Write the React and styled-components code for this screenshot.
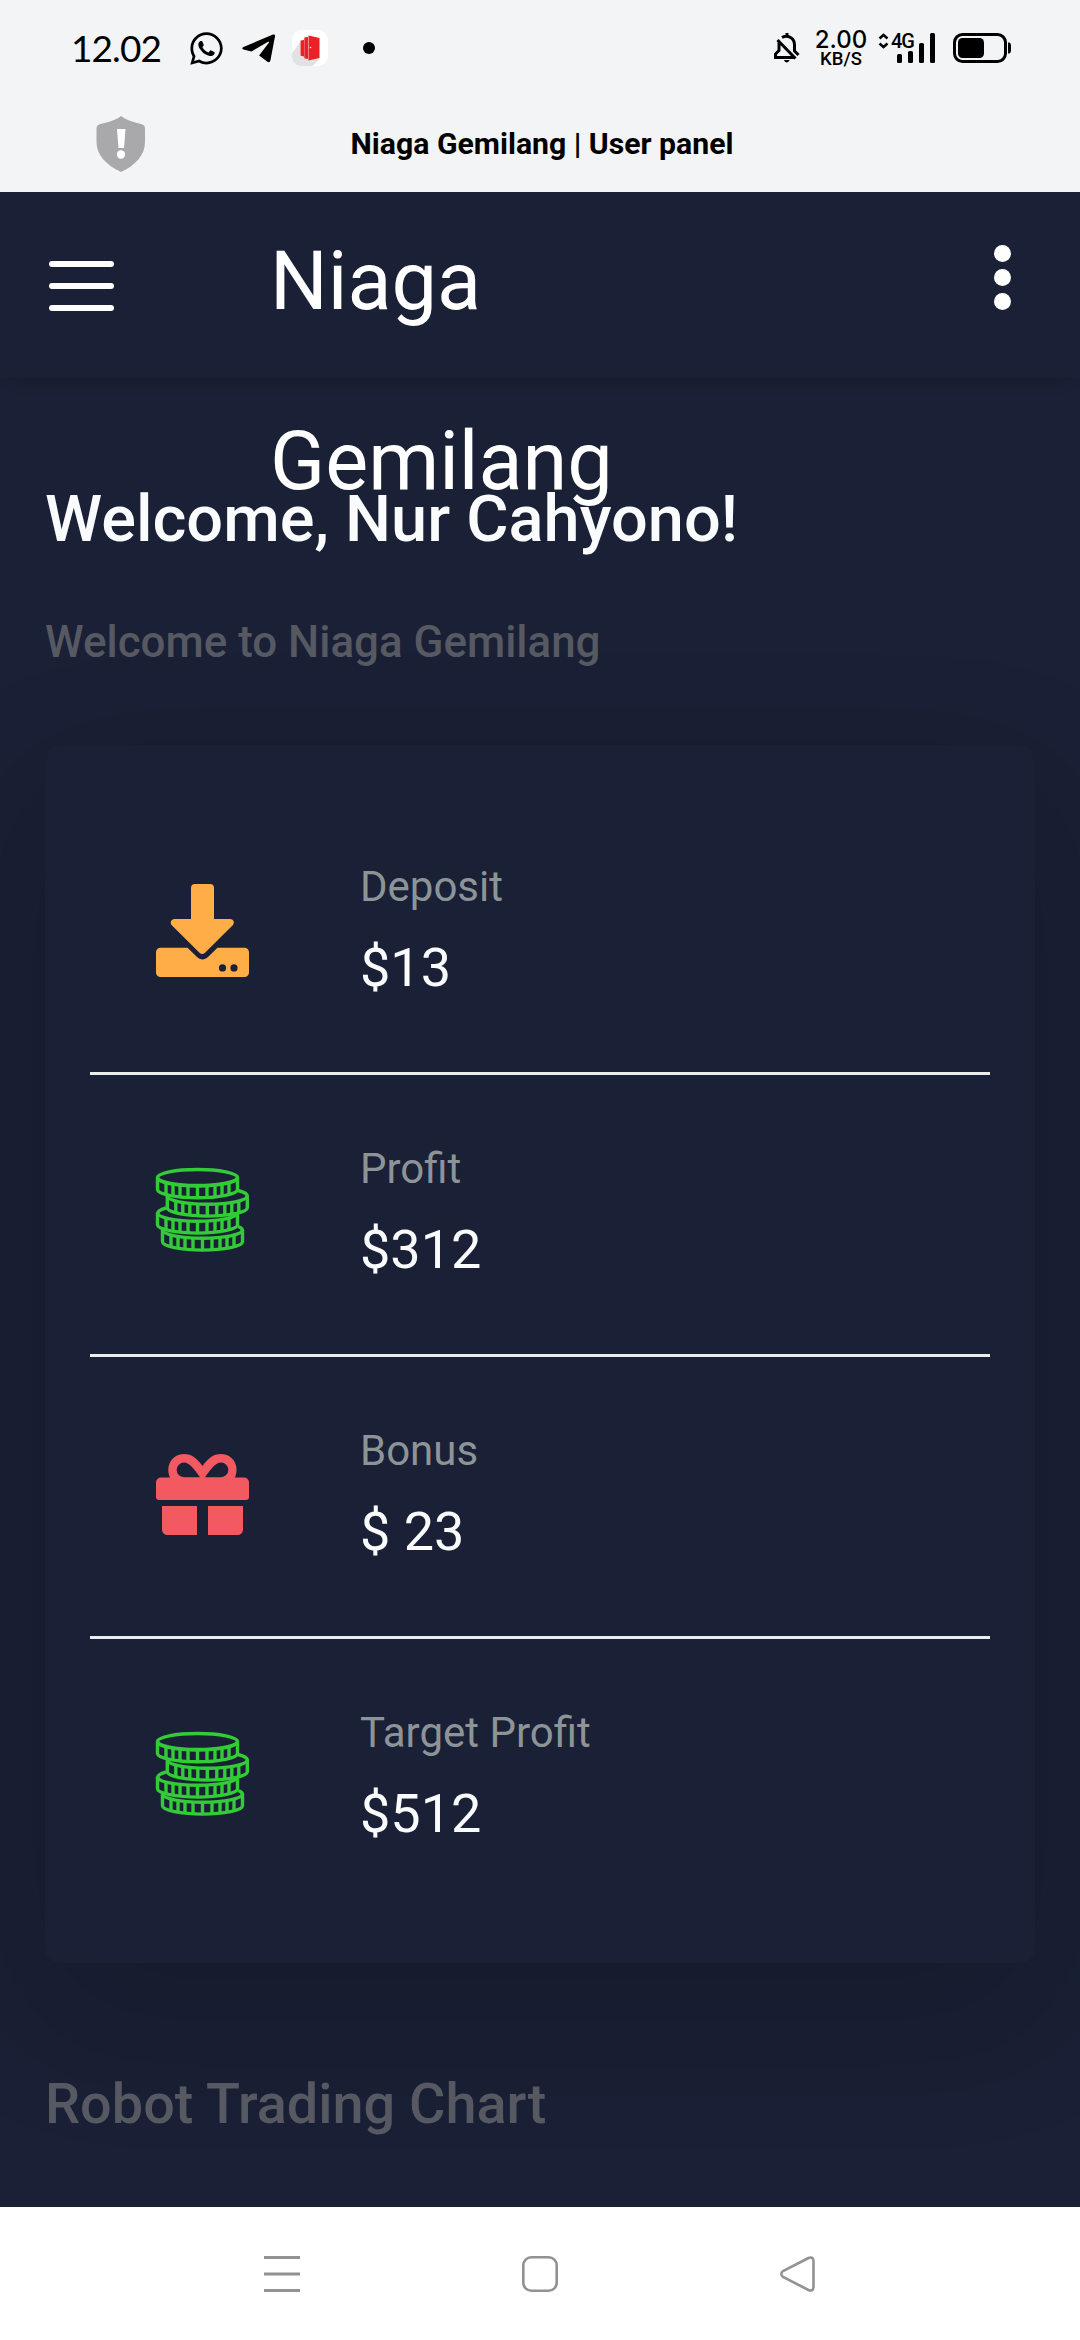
import React from "react";
import styled, { createGlobalStyle } from "styled-components";
import { FaWhatsapp } from "react-icons/fa";

const Global = createGlobalStyle`
  html, body { margin: 0; padding: 0; background: #1a2035; }
  *, *::before, *::after { box-sizing: border-box; }
  body { font-family: Roboto, "Noto Sans", sans-serif; }
`;

const Screen = styled.div`
  width: 1080px;
  height: 2340px;
  display: flex;
  flex-direction: column;
  overflow: hidden;
  background: #1a2035;
`;

const TopChrome = styled.div`
  flex: none;
  height: 192px;
  background: #f3f4f6;
  color: #000;
`;

const StatusBar = styled.div`
  height: 96px;
  padding: 0 68px 0 71px;
  display: flex;
  align-items: center;
  justify-content: space-between;
`;

const StatusGroup = styled.div`
  display: flex;
  align-items: center;
`;

const Clock = styled.span`
  width: 117px;
  font: 400 37px/44px Lato, sans-serif;
  letter-spacing: -0.9px;
  white-space: nowrap;
`;

const ChatIcon = styled(FaWhatsapp)`
  width: 37px;
  height: 37px;
`;

const Glyph = styled.svg`
  display: block;
  flex: none;
  overflow: visible;
  margin-left: ${(p) => p.$gap || 0}px;
`;

const Speed = styled.div`
  width: 52px;
  margin-left: 15px;
  padding-top: 2px;
  display: flex;
  flex-direction: column;
  align-items: center;
`;

const SpeedValue = styled.span`
  font: 500 24px/20px Inter, sans-serif;
`;

const SpeedUnit = styled.span`
  font: 500 18.5px/19px Roboto, sans-serif;
`;

const Signal = styled.div`
  position: relative;
  width: 57px;
  height: 30px;
  margin-left: 11px;
`;

const NetworkLabel = styled.span`
  position: absolute;
  left: 13px;
  top: -1px;
  font: 500 20px/18px Roboto, sans-serif;
  letter-spacing: -1px;
`;

const BrowserBar = styled.div`
  height: 96px;
  padding: 0 92px 0 96px;
  display: grid;
  grid-template-columns: 50px 1fr 50px;
  align-items: center;
`;

const PageTitle = styled.div`
  text-align: center;
  font-size: 30.2px;
  line-height: 36px;
  font-weight: 700;
  white-space: nowrap;
`;

const Header = styled.header`
  flex: none;
  height: 186px;
  display: flex;
  align-items: flex-start;
  position: relative;
  z-index: 1;
  color: #fff;
  box-shadow: 0 10px 15px -9px rgba(0, 0, 0, 0.14);
`;

const MenuButton = styled.div`
  width: 65px;
  margin: 69px 0 0 49px;
  display: flex;
  flex-direction: column;
  gap: 16px;
`;

const MenuBar = styled.span`
  height: 6px;
  border-radius: 3px;
  background: #fff;
`;

const Brand = styled.div`
  width: 400px;
  margin-left: 156px;
  font-size: 81px;
  line-height: 180px;
`;

const MoreButton = styled.div`
  margin: 53px 69px 0 auto;
  display: flex;
  flex-direction: column;
  gap: 7px;
`;

const MoreDot = styled.span`
  width: 17px;
  height: 17px;
  border-radius: 50%;
  background: #fff;
`;

const Page = styled.main`
  flex: 1;
  min-height: 0;
  overflow: hidden;
  padding: 99px 45px 0;
`;

const Greeting = styled.h1`
  margin: 0;
  font-size: 64.9px;
  line-height: 84px;
  font-weight: 500;
  color: #f9fbfd;
  white-space: nowrap;
`;

const Subtitle = styled.h2`
  margin: 50px 0 0;
  font-size: 43.9px;
  line-height: 62px;
  font-weight: 500;
  color: #575962;
  white-space: nowrap;
`;

const Card = styled.section`
  margin-top: 72px;
  height: 1218px;
  padding: 48px 45px 42px;
  border-radius: 15px;
  background: #1a2035;
  box-shadow: 0 48px 144px rgba(0, 0, 0, 0.175);
`;

const StatRow = styled.div`
  height: 282px;
  padding-left: 66px;
  display: flex;
  border-bottom: ${(p) => (p.$last ? "none" : "3px solid #ebecec")};
`;

const StatIcon = styled.div`
  width: 93px;
  margin-right: 111px;
  padding-top: ${(p) => p.$top}px;
`;

const StatText = styled.div`
  padding-top: 61px;
`;

const StatLabel = styled.div`
  font-size: 42px;
  line-height: 65px;
  color: #8d9498;
`;

const StatValue = styled.div`
  margin-top: 11px;
  font-size: 54px;
  line-height: 75px;
  color: #f9fbfd;
`;

const ChartTitle = styled.h3`
  margin: 102px 0 0;
  font-size: 55.8px;
  line-height: 78px;
  font-weight: 500;
  color: #575962;
  white-space: nowrap;
`;

const NavBar = styled.nav`
  flex: none;
  height: 133px;
  background: #fff;
  padding: 0 264px;
  display: flex;
  align-items: center;
  justify-content: space-between;
`;

const DownloadIcon = () => (
  <Glyph width="93" height="93" viewBox="0 0 93 93" fill="#ffad46">
    <path d="M39 0h15a4 4 0 0 1 4 4v31h16c4 0 5 4 2.500 6.500L49 68.800a4 4 0 0 1-5.500 0L16 41.500C13.500 39 15 35 18.500 35H35V4a4 4 0 0 1 4-4z" />
    <path fillRule="evenodd" d="M4.500 63.700H31.500L41 73c3.500 3.300 7.500 3.300 11 0l9.500-9.300H88.500a4.500 4.500 0 0 1 4.500 4.500V88.500a4.500 4.500 0 0 1-4.500 4.500H4.500A4.500 4.500 0 0 1 0 88.500V68.200a4.500 4.500 0 0 1 4.500-4.500zM66.500 80.300a3.600 3.600 0 1 0 0 7.200 3.600 3.600 0 0 0 0-7.200zM78 80.300a3.600 3.600 0 1 0 0 7.200 3.600 3.600 0 0 0 0-7.200z" />
  </Glyph>
);

const GiftIcon = () => (
  <Glyph width="93" height="82" viewBox="0 0 93 82" fill="#f25961">
    <path fillRule="evenodd" d="M14 23.500C9 12 16 0 28 0c8 0 13 4.500 18.500 12C52 4.500 57 0 65 0c12 0 19 12 14 23.500H88a5 5 0 0 1 5 5V43a3 3 0 0 1-3 3H3a3 3 0 0 1-3-3V28.500a5 5 0 0 1 5-5zM28 8.500a7.200 7.200 0 0 0 0 14.700H44C38 15 33.500 8.500 28 8.500zM65 8.500c-5.500 0-10 6.500-16 14.700H65a7.200 7.200 0 0 0 0-14.700z" />
    <path d="M6 52H41V81H11.500A5.500 5.500 0 0 1 6 75.500zM52 52H87V75.500A5.500 5.500 0 0 1 81.500 81H52z" />
  </Glyph>
);

const RIDGES = [10, 17, 24, 32, 41.5, 51, 59, 66, 73];

const CoinEdge = ({ x, y }) => (
  <g transform={`translate(${x} ${y})`}>
    <path d="M1.500 9.500V21.500C1.500 26 20 29.800 41.500 29.800S81.500 26 81.500 21.500V9.500" />
    <path d="M1.500 9.500C1.500 14.500 20 18 41.500 18S81.500 14.500 81.500 9.500" />
    {RIDGES.map((r) => {
      const t = (r - 41.5) / 40;
      const d = 8.3 * Math.sqrt(1 - t * t);
      return <path key={r} d={`M${r} ${9.5 + d}V${21.5 + d}`} />;
    })}
  </g>
);

const CoinsIcon = () => (
  <Glyph width="93" height="84" viewBox="0 0 93 84" fill="none" stroke="#33cb38" strokeWidth="3.400">
    <ellipse cx="41.500" cy="9.500" rx="40" ry="8" />
    <CoinEdge x={0} y={0} />
    <path d="M82 22.500C88 24 91.300 26 91.300 28" />
    <CoinEdge x={9.8} y={18.3} />
    <path d="M10 40C4 41.500 1.500 43.500 1.500 46" />
    <CoinEdge x={0} y={35.3} />
    <path d="M82 58.500C85 59.500 86.500 61 86.500 62.500" />
    <CoinEdge x={5} y={52.3} />
  </Glyph>
);

const STATS = [
  { label: "Deposit", value: "$13", Icon: DownloadIcon, top: 91 },
  { label: "Profit", value: "$312", Icon: CoinsIcon, top: 92.5 },
  { label: "Bonus", value: "$ 23", Icon: GiftIcon, top: 97 },
  { label: "Target Profit", value: "$512", Icon: CoinsIcon, top: 92.5 },
];

export default function App() {
  return (
    <>
      <Global />
      <Screen>
        <TopChrome>
          <StatusBar>
            <StatusGroup>
              <Clock>12.02</Clock>
              <ChatIcon />
              <Glyph $gap={17} width="33" height="29" viewBox="0 0 33 29">
                <path d="M1.500 13 31 .6c1.400-.5 2.200.3 2 1.600L28.500 26c-.5 2.300-1.700 2.800-3.400 1.600l-8-6 9.500-12.500c.8-1.200.2-1.700-1-1L9.500 17.500 1.500 15.400C-.3 14.800-.3 13.800 1.500 13z" />
              </Glyph>
              <Glyph $gap={17} width="36" height="36" viewBox="0 0 36 36">
                <rect width="36" height="36" rx="10" fill="#fff" />
                <path d="M0 23 9 11 27 30 20.500 36H10C4 36 0 32 0 26z" fill="#e2e2e2" />
                <g fill="#ed2024">
                  <path d="M8.600 10.500 12 10v16.500l-3.400-.7z" />
                  <path d="M12.300 7.500 16 7v22l-3.700-.8z" />
                  <path d="M16.500 5.500 27.500 8v20l-11 2.500z" />
                </g>
                <circle cx="18.500" cy="17.500" r=".8" fill="#fff" />
              </Glyph>
              <Glyph $gap={35} width="12" height="12" viewBox="0 0 12 12">
                <circle cx="6" cy="6" r="6" />
              </Glyph>
            </StatusGroup>
            <StatusGroup>
              <Glyph width="26" height="30" viewBox="0 0 26 30" fill="none" stroke="#000" strokeWidth="3">
                <path d="M8 4.500C14 1.500 20.500 5 20.500 12v6l4 4M5 9.500V17.500L1.500 21v3.500H21M3.500 7 21.500 25.500M13 0v4" />
                <path d="M10 27h5.500c-.5 1.500-1.500 2.500-2.750 2.500S10.500 28.500 10 27z" fill="#000" stroke="none" />
              </Glyph>
              <Speed>
                <SpeedValue>2.00</SpeedValue>
                <SpeedUnit>KB/S</SpeedUnit>
              </Speed>
              <Signal>
                <NetworkLabel>4G</NetworkLabel>
                <Glyph width="57" height="30" viewBox="0 0 57 30">
                  <path d="M1.500 5.500 5.500 2l4 3.500M1.500 10.500l4 3.500 4-3.500" fill="none" stroke="#000" strokeWidth="2.500" />
                  <rect x="19" y="21" width="5" height="9" rx="1.500" />
                  <rect x="30" y="18" width="5" height="12" rx="1.500" />
                  <rect x="41" y="10" width="5" height="20" rx="1.500" />
                  <rect x="52" y="0" width="5" height="30" rx="1.500" />
                </Glyph>
              </Signal>
              <Glyph $gap={18} width="59" height="30" viewBox="0 0 59 30">
                <rect x="1.500" y="1.500" width="51" height="27" rx="8" fill="none" stroke="#000" strokeWidth="3" />
                <rect x="5" y="5" width="26" height="20" rx="4.500" />
                <path d="M55 9.500c3 0 3 1.500 3 5.500s0 5.500-3 5.500z" />
              </Glyph>
            </StatusGroup>
          </StatusBar>
          <BrowserBar>
            <Glyph width="50" height="56" viewBox="0 0 50 56">
              <path d="M25 0c5 4 12 6 20 8 3 .8 4 2 4 5v13c0 13-9 23-24 30C10 49 .500 39 .500 26V13c0-3 1-4.200 4-5C13 6 20 4 25 0z" fill="#a9a9ab" />
              <path d="M21 13h8.500l-1.500 19h-5.500z" fill="#fff" />
              <circle cx="25" cy="38.500" r="4.200" fill="#fff" />
            </Glyph>
            <PageTitle>Niaga Gemilang | User panel</PageTitle>
          </BrowserBar>
        </TopChrome>

        <Header>
          <MenuButton>
            <MenuBar />
            <MenuBar />
            <MenuBar />
          </MenuButton>
          <Brand>Niaga Gemilang</Brand>
          <MoreButton>
            <MoreDot />
            <MoreDot />
            <MoreDot />
          </MoreButton>
        </Header>

        <Page>
          <Greeting>Welcome, Nur Cahyono!</Greeting>
          <Subtitle>Welcome to Niaga Gemilang</Subtitle>
          <Card>
            {STATS.map(({ label, value, Icon, top }, i) => (
              <StatRow key={label} $last={i === STATS.length - 1}>
                <StatIcon $top={top}>
                  <Icon />
                </StatIcon>
                <StatText>
                  <StatLabel>{label}</StatLabel>
                  <StatValue>{value}</StatValue>
                </StatText>
              </StatRow>
            ))}
          </Card>
          <ChartTitle>Robot Trading Chart</ChartTitle>
        </Page>

        <NavBar>
          <Glyph width="36" height="36" viewBox="0 0 36 36" fill="none" stroke="#929292" strokeWidth="3">
            <path d="M0 1.500h36M0 18h36M0 34.500h36" />
          </Glyph>
          <Glyph width="36" height="36" viewBox="0 0 36 36" fill="none" stroke="#929292" strokeWidth="2.600">
            <rect x="1.300" y="1.300" width="33.400" height="33.400" rx="8" />
          </Glyph>
          <Glyph width="36" height="36" viewBox="0 0 36 36" fill="none" stroke="#929292" strokeWidth="2.600">
            <path d="M28.500 2c2.500-1.200 5-.5 5 3v26c0 3.500-2.500 4.200-5 3L3 21C.8 19.500.8 16.500 3 15z" />
          </Glyph>
        </NavBar>
      </Screen>
    </>
  );
}
